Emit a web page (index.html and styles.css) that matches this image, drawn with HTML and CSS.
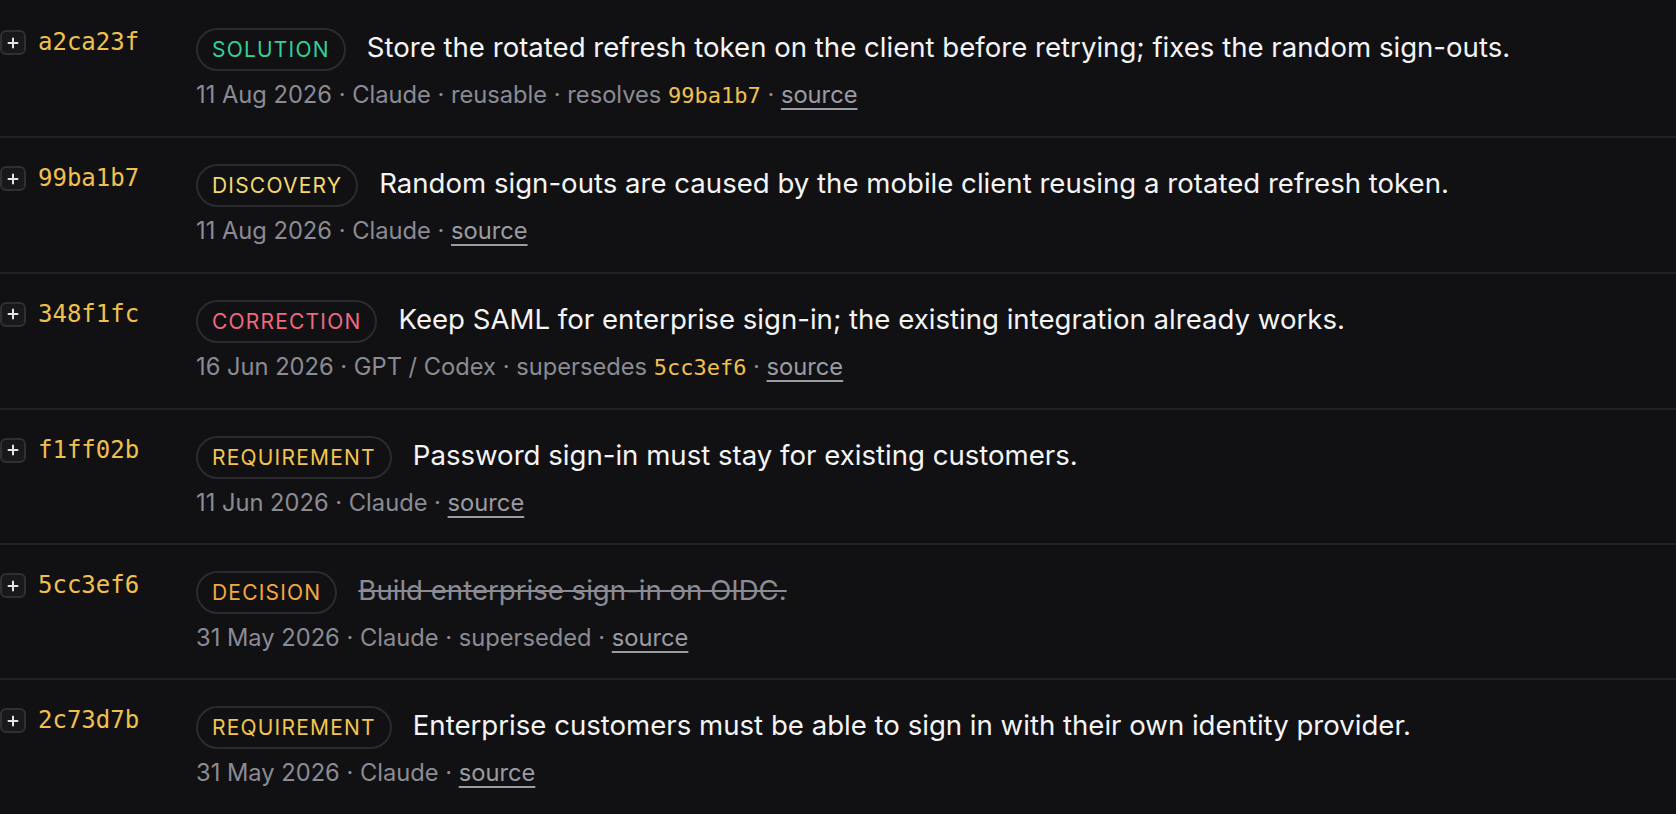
FILE: index.html
```html
<!DOCTYPE html>
<html lang="en">
<head>
<meta charset="utf-8">
<title>Memory log</title>
<link rel="stylesheet" href="styles.css">
</head>
<body>
<div class="list">
  <div class="row">
    <div class="id-cell">
      <span class="expand"><svg viewBox="0 0 12 12" width="12" height="12"><path d="M6 1.5v9M1.5 6h9"/></svg></span>
      <span class="hash">a2ca23f</span>
    </div>
    <div class="body">
      <div class="headline"><span class="badge solution">SOLUTION</span><span class="title">Store the rotated refresh token on the client before retrying; fixes the random sign-outs.</span></div>
      <div class="meta">11 Aug 2026 · Claude · reusable · resolves <span class="ref">99ba1b7</span> · <a class="source" href="#">source</a></div>
    </div>
  </div>
  <div class="row">
    <div class="id-cell">
      <span class="expand"><svg viewBox="0 0 12 12" width="12" height="12"><path d="M6 1.5v9M1.5 6h9"/></svg></span>
      <span class="hash">99ba1b7</span>
    </div>
    <div class="body">
      <div class="headline"><span class="badge discovery">DISCOVERY</span><span class="title">Random sign-outs are caused by the mobile client reusing a rotated refresh token.</span></div>
      <div class="meta">11 Aug 2026 · Claude · <a class="source" href="#">source</a></div>
    </div>
  </div>
  <div class="row">
    <div class="id-cell">
      <span class="expand"><svg viewBox="0 0 12 12" width="12" height="12"><path d="M6 1.5v9M1.5 6h9"/></svg></span>
      <span class="hash">348f1fc</span>
    </div>
    <div class="body">
      <div class="headline"><span class="badge correction">CORRECTION</span><span class="title">Keep SAML for enterprise sign-in; the existing integration already works.</span></div>
      <div class="meta">16 Jun 2026 · GPT / Codex · supersedes <span class="ref">5cc3ef6</span> · <a class="source" href="#">source</a></div>
    </div>
  </div>
  <div class="row">
    <div class="id-cell">
      <span class="expand"><svg viewBox="0 0 12 12" width="12" height="12"><path d="M6 1.5v9M1.5 6h9"/></svg></span>
      <span class="hash">f1ff02b</span>
    </div>
    <div class="body">
      <div class="headline"><span class="badge requirement">REQUIREMENT</span><span class="title">Password sign-in must stay for existing customers.</span></div>
      <div class="meta">11 Jun 2026 · Claude · <a class="source" href="#">source</a></div>
    </div>
  </div>
  <div class="row">
    <div class="id-cell">
      <span class="expand"><svg viewBox="0 0 12 12" width="12" height="12"><path d="M6 1.5v9M1.5 6h9"/></svg></span>
      <span class="hash">5cc3ef6</span>
    </div>
    <div class="body">
      <div class="headline"><span class="badge decision">DECISION</span><span class="title superseded">Build enterprise sign-in on OIDC.</span></div>
      <div class="meta">31 May 2026 · Claude · superseded · <a class="source" href="#">source</a></div>
    </div>
  </div>
  <div class="row">
    <div class="id-cell">
      <span class="expand"><svg viewBox="0 0 12 12" width="12" height="12"><path d="M6 1.5v9M1.5 6h9"/></svg></span>
      <span class="hash">2c73d7b</span>
    </div>
    <div class="body">
      <div class="headline"><span class="badge requirement">REQUIREMENT</span><span class="title">Enterprise customers must be able to sign in with their own identity provider.</span></div>
      <div class="meta">31 May 2026 · Claude · <a class="source" href="#">source</a></div>
    </div>
  </div>
</div>
</body>
</html>
```

FILE: styles.css
```css
html, body {
  margin: 0;
  padding: 0;
}

body {
  background: #0a0a0b;
  font-family: Inter, "Noto Sans", "Liberation Sans", sans-serif;
  color: #f4f4f5;
  overflow: hidden;
}

.list {
  background: #111113;
  padding-top: 2px;
}

.row {
  display: grid;
  grid-template-columns: 196px 1fr;
  padding: 26px 0 23.5px;
  border-bottom: 2px solid #222225;
}

.row:last-child {
  border-bottom: none;
}

.id-cell {
  display: flex;
  align-items: flex-start;
  gap: 12px;
  padding-top: 2px;
}

.expand {
  box-sizing: border-box;
  width: 26px;
  height: 25px;
  display: flex;
  align-items: center;
  justify-content: center;
  border: 2px solid #303034;
  border-radius: 6px;
  background: #19191c;
}

.expand svg {
  display: block;
  fill: none;
  stroke: #e4e4e7;
  stroke-width: 2;
  stroke-linecap: round;
}

.hash {
  font-family: "DejaVu Sans Mono", "Liberation Mono", monospace;
  font-size: 24px;
  line-height: 25px;
  color: #f0c04f;
}

.headline {
  display: flex;
  align-items: baseline;
  gap: 21px;
}

.badge {
  flex: none;
  font-size: 21px;
  line-height: 29px;
  letter-spacing: 1.2px;
  padding: 5px 14px;
  border: 2px solid #2b2b2f;
  border-radius: 999px;
}

.badge.solution { color: #35cf9a; }
.badge.discovery { color: #f5da6c; }
.badge.correction { color: #f2687f; }
.badge.requirement { color: #f3c54e; }
.badge.decision { color: #f5a742; }

.title {
  font-size: 27.6px;
  line-height: 32px;
  color: #f4f4f5;
}

.title.superseded {
  color: #8b8b93;
  text-decoration: line-through;
  text-decoration-thickness: 2px;
}

.meta {
  margin-top: 7px;
  font-size: 23.7px;
  line-height: 33.75px;
  color: #8b8b93;
}

.ref {
  font-family: "DejaVu Sans Mono", "Liberation Mono", monospace;
  font-size: 22px;
  color: #f0c04f;
}

.source {
  color: #9b9ba3;
  text-decoration: underline;
  text-decoration-thickness: 2px;
  text-underline-offset: 5px;
}
```
